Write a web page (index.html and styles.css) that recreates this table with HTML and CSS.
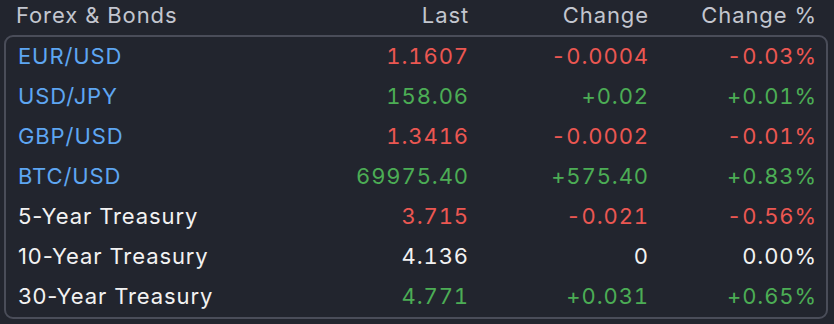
FILE: index.html
```html
<!DOCTYPE html>
<html lang="en">
<head>
<meta charset="utf-8">
<link rel="stylesheet" href="styles.css">
</head>
<body>
<div class="widget">
  <div class="grid head">
    <div class="name">Forex &amp; Bonds</div>
    <div class="num">Last</div>
    <div class="num">Change</div>
    <div class="num">Change %</div>
  </div>
  <div class="box">
    <div class="grid row">
      <div class="name link">EUR/USD</div>
      <div class="num down">1.1607</div>
      <div class="num down">-0.0004</div>
      <div class="num down">-0.03%</div>
    </div>
    <div class="grid row">
      <div class="name link">USD/JPY</div>
      <div class="num up">158.06</div>
      <div class="num up">+0.02</div>
      <div class="num up">+0.01%</div>
    </div>
    <div class="grid row">
      <div class="name link">GBP/USD</div>
      <div class="num down">1.3416</div>
      <div class="num down">-0.0002</div>
      <div class="num down">-0.01%</div>
    </div>
    <div class="grid row">
      <div class="name link">BTC/USD</div>
      <div class="num up">69975.40</div>
      <div class="num up">+575.40</div>
      <div class="num up">+0.83%</div>
    </div>
    <div class="grid row">
      <div class="name">5-Year Treasury</div>
      <div class="num down">3.715</div>
      <div class="num down">-0.021</div>
      <div class="num down">-0.56%</div>
    </div>
    <div class="grid row">
      <div class="name">10-Year Treasury</div>
      <div class="num">4.136</div>
      <div class="num">0</div>
      <div class="num">0.00%</div>
    </div>
    <div class="grid row">
      <div class="name">30-Year Treasury</div>
      <div class="num up">4.771</div>
      <div class="num up">+0.031</div>
      <div class="num up">+0.65%</div>
    </div>
  </div>
</div>
</body>
</html>
```
FILE: styles.css
```css
html, body {
  margin: 0;
  padding: 0;
  background: #22252e;
}
body {
  font-family: Inter, "Noto Sans", sans-serif;
  font-size: 22px;
  letter-spacing: 0.9px;
  color: #f2f2f2;
}
.widget {
  width: 824px;
  margin-left: 4px;
}
.grid {
  display: grid;
  grid-template-columns: 1fr 180px 180px 168px;
  align-items: center;
}
.num {
  text-align: right;
  margin-right: -1px;
}
.row .num {
  font-variant-numeric: tabular-nums;
}
.head {
  height: 35px;
  padding: 0 10px 0 12px;
  color: #c3c6cf;
}
.head .name,
.head .num {
  margin-top: -6px;
}
.head .num {
  margin-right: 1px;
}
.box {
  border: 2px solid #4a4d59;
  border-radius: 9px;
  padding: 0 10px 0 12px;
}
.row {
  height: 40px;
}
.row:first-child {
  margin-top: -1px;
}
.row:last-child {
  margin-bottom: 1px;
}
.link {
  color: #5ea6f2;
}
.up {
  color: #4cad55;
}
.down {
  color: #eb5752;
}
```
